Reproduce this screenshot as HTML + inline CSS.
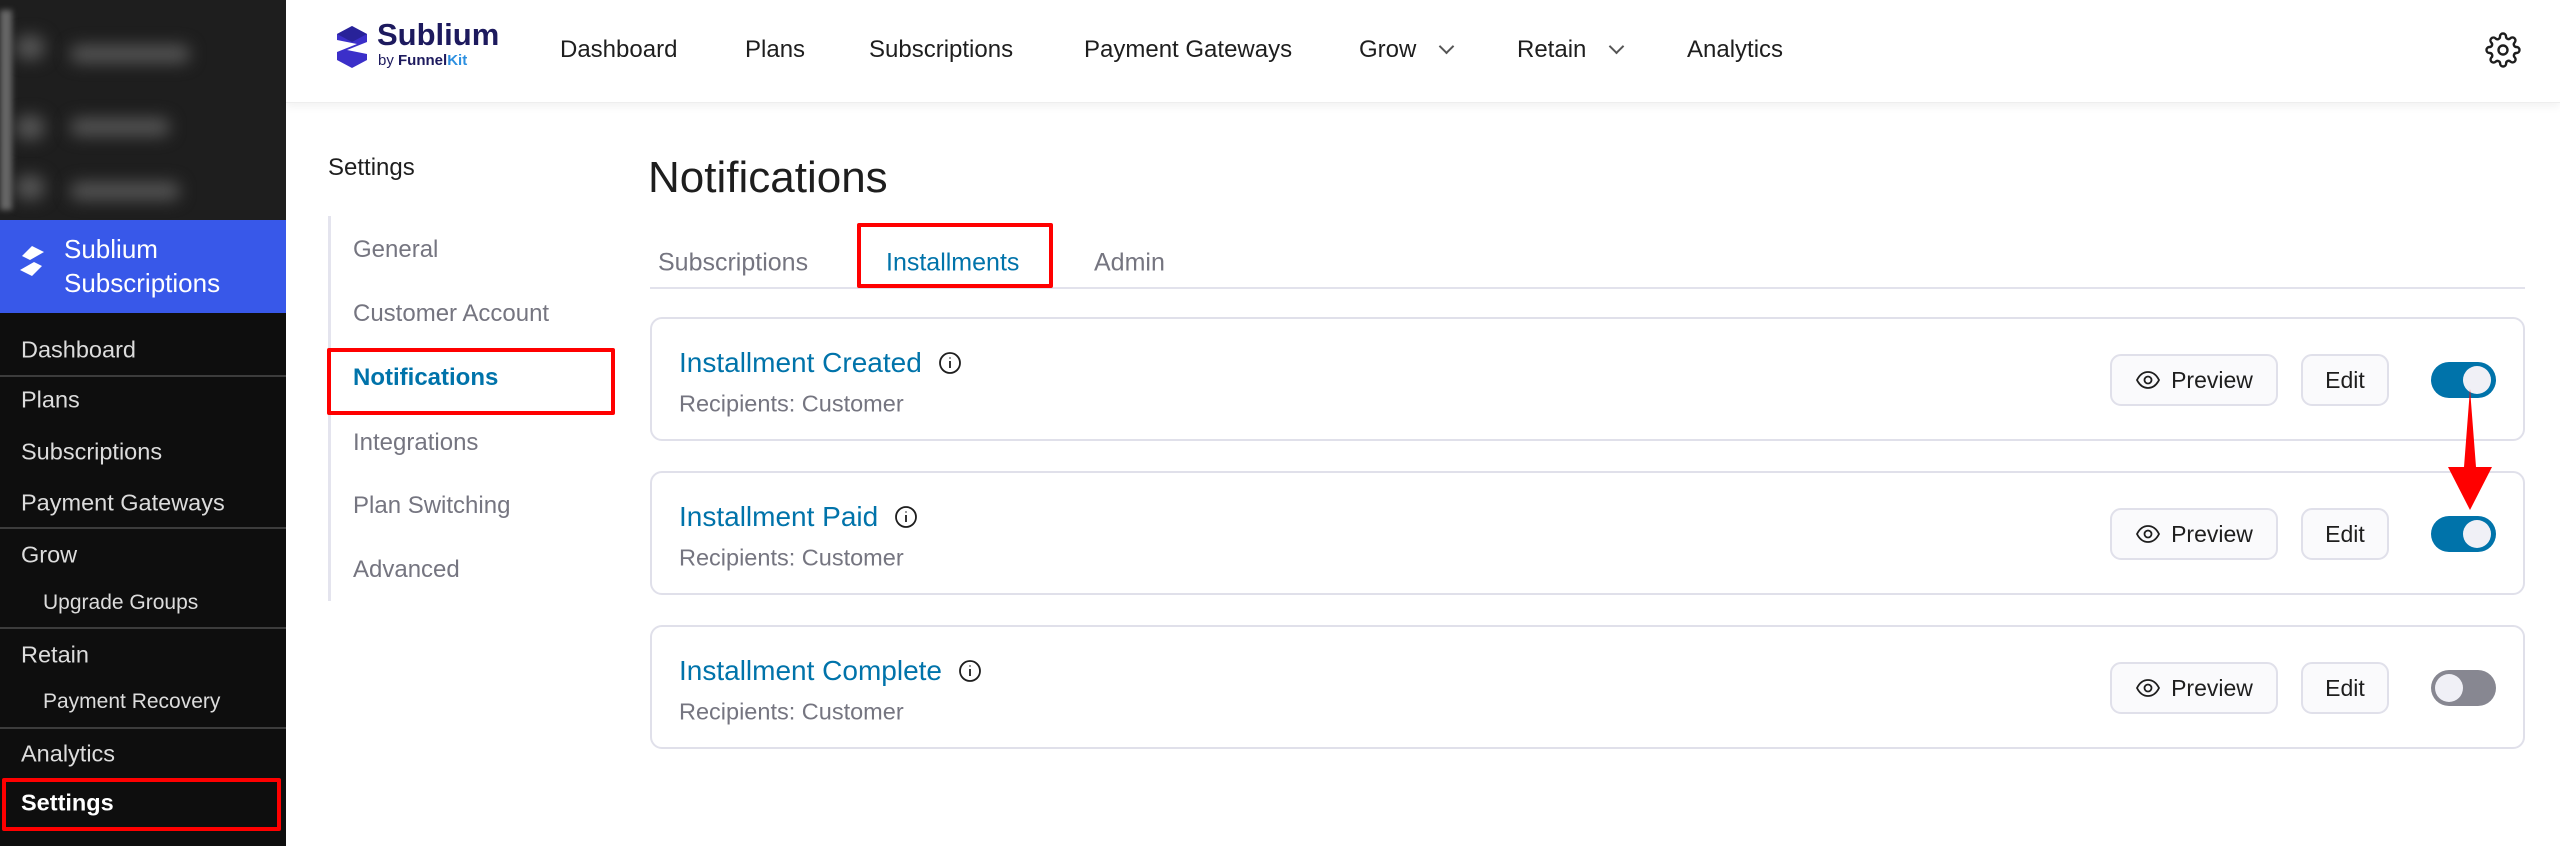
<!DOCTYPE html>
<html><head><meta charset="utf-8"><style>
*{box-sizing:border-box;margin:0;padding:0}
body{width:2560px;height:846px;overflow:hidden;font-family:"Liberation Sans",sans-serif;background:#fff;position:relative}
.abs{position:absolute}
#side{left:0;top:0;width:286px;height:846px;background:#0e0e0e}
#blur{left:0;top:0;width:286px;height:220px;background:#1e1e1e}
.bl{position:absolute;background:#555;border-radius:20px;filter:blur(8px)}
#blue{left:0;top:220px;width:286px;height:93px;background:#3858e9}
.si{position:absolute;left:21px;color:#dcdcdc;font-size:23.5px;transform:translateY(-50%)}
.sub{left:43px;font-size:21px}
.sep{position:absolute;left:0;width:286px;height:2px;background:#3c3c3c}
#hdr{left:286px;top:0;width:2274px;height:103px;background:#fff;box-shadow:0 4px 8px rgba(0,0,0,.05);border-bottom:1px solid #eee}
.nav{position:absolute;top:50px;transform:translateY(-50%);font-size:24px;color:#1e1e1e}
.st{position:absolute;left:353px;font-size:24px;color:#757580;transform:translateY(-50%)}
.tab{position:absolute;top:263px;transform:translateY(-50%);font-size:25px;color:#757580}
.card{position:absolute;left:650px;width:1875px;height:124px;border:2px solid #e0e0ea;border-radius:12px;background:#fff}
.ct{position:absolute;left:27px;top:44px;transform:translateY(-50%);font-size:28px;color:#0073aa;display:flex;align-items:center}
.ct svg{margin-left:16px}
.cr{position:absolute;left:27px;top:85px;transform:translateY(-50%);font-size:23.5px;color:#757580}
.btn{position:absolute;top:35px;height:52px;border:2px solid #e0e0ea;border-radius:11px;background:#fafafc;font-size:23px;color:#1e1e1e;display:flex;align-items:center;justify-content:center}
.tg{position:absolute;left:1779px;top:43px;width:65px;height:36px;border-radius:18px;background:#0073aa}
.tg::after{content:"";position:absolute;top:4px;left:32px;width:28px;height:28px;border-radius:50%;background:#f0f0f6}
.tg.off{background:#878791}
.tg.off::after{left:4px}
.red{position:absolute;border:4px solid #f00;border-radius:2px}
</style></head><body>
<div id="side" class="abs"></div>
<div id="blur" class="abs">
<div class="bl" style="left:15px;top:35px;width:30px;height:25px"></div>
<div class="bl" style="left:70px;top:45px;width:120px;height:18px"></div>
<div class="bl" style="left:15px;top:115px;width:30px;height:25px"></div>
<div class="bl" style="left:70px;top:118px;width:100px;height:18px"></div>
<div class="bl" style="left:15px;top:175px;width:30px;height:25px"></div>
<div class="bl" style="left:70px;top:182px;width:110px;height:18px"></div>
<div style="position:absolute;left:0;top:10px;width:12px;height:200px;background:#666;filter:blur(3px)"></div>
</div>
<div id="blue" class="abs">
<svg class="abs" style="left:18px;top:24px" width="28" height="34" viewBox="0 0 28 34"><path d="M14 2 L26 8 L12 16 L24 22 L14 32 L2 26 L16 18 L4 12 Z" fill="#fff"/></svg>
<div class="abs" style="left:64px;top:12px;color:#fff;font-size:26px;line-height:34px">Sublium<br>Subscriptions</div>
</div>
<div class="si" style="top:350px">Dashboard</div>
<div class="sep" style="top:375px"></div>
<div class="si" style="top:400px">Plans</div>
<div class="si" style="top:452px">Subscriptions</div>
<div class="si" style="top:503px">Payment Gateways</div>
<div class="sep" style="top:527px"></div>
<div class="si" style="top:555px">Grow</div>
<div class="si sub" style="top:603px">Upgrade Groups</div>
<div class="sep" style="top:627px"></div>
<div class="si" style="top:655px">Retain</div>
<div class="si sub" style="top:702px">Payment Recovery</div>
<div class="sep" style="top:727px"></div>
<div class="si" style="top:754px">Analytics</div>
<div class="si" style="top:803px;color:#fff;font-weight:bold">Settings</div>
<div class="red" style="left:2px;top:778px;width:279px;height:53px"></div>

<div id="hdr" class="abs">
<svg class="abs" style="left:47px;top:24px" width="38" height="46" viewBox="0 0 38 46"><path d="M19 2 L34 10 L34 18 L14 26 L34 30 L34 36 L19 44 L4 36 L4 28 L24 20 L4 16 L4 10 Z" fill="#3b2fc9"/><path d="M4 10 L19 2 L34 10 L19 18 Z" fill="#1c1a7a" opacity=".6"/></svg>
<div class="abs" style="left:91px;top:17px;font-size:31px;font-weight:bold;color:#1d1a5e">Sublium</div>
<div class="abs" style="left:92px;top:52px;font-size:15px;color:#1d1a5e">by <b>Funnel</b><b style="color:#2b8fe0">Kit</b></div>
<div class="nav" style="left:274px">Dashboard</div>
<div class="nav" style="left:459px">Plans</div>
<div class="nav" style="left:583px">Subscriptions</div>
<div class="nav" style="left:798px">Payment Gateways</div>
<div class="nav" style="left:1073px">Grow <span style="display:inline-block;width:11px;height:11px;border-right:2px solid #555;border-bottom:2px solid #555;transform:rotate(45deg);margin-left:18px;position:relative;top:-5px"></span></div>
<div class="nav" style="left:1231px">Retain <span style="display:inline-block;width:11px;height:11px;border-right:2px solid #555;border-bottom:2px solid #555;transform:rotate(45deg);margin-left:18px;position:relative;top:-5px"></span></div>
<div class="nav" style="left:1401px">Analytics</div>
<svg class="abs" style="left:2199px;top:32px" width="36" height="36" viewBox="0 0 24 24" fill="none" stroke="#1e1e1e" stroke-width="1.6"><circle cx="12" cy="12" r="3"/><path d="M19.4 15a1.65 1.65 0 0 0 .33 1.82l.06.06a2 2 0 1 1-2.830 2.83l-.06-.06a1.65 1.65 0 0 0-1.82-.33 1.65 1.65 0 0 0-1 1.51V21a2 2 0 1 1-4 0v-.09A1.65 1.65 0 0 0 9 19.4a1.65 1.65 0 0 0-1.820.33l-.06.06a2 2 0 1 1-2.830-2.83l.06-.06A1.65 1.65 0 0 0 4.680 15a1.65 1.65 0 0 0-1.510-1H3a2 2 0 1 1 0-4h.09A1.65 1.65 0 0 0 4.600 9a1.65 1.65 0 0 0-.33-1.820l-.06-.06a2 2 0 1 1 2.830-2.830l.06.06A1.65 1.65 0 0 0 9 4.680a1.65 1.65 0 0 0 1-1.510V3a2 2 0 1 1 4 0v.09a1.65 1.65 0 0 0 1 1.510 1.65 1.65 0 0 0 1.820-.33l.06-.06a2 2 0 1 1 2.830 2.830l-.06.06A1.65 1.65 0 0 0 19.400 9a1.65 1.65 0 0 0 1.510 1H21a2 2 0 1 1 0 4h-.09a1.65 1.65 0 0 0-1.510 1z"/></svg>
</div>

<div class="abs" style="left:328px;top:154px;font-size:24px;color:#1e1e1e">Settings</div>
<div class="abs" style="left:328px;top:216px;width:3px;height:385px;background:#e4e4ee"></div>
<div class="abs" style="left:328px;top:350px;width:3px;height:60px;background:#0073aa"></div>
<div class="st" style="top:250px">General</div>
<div class="st" style="top:314px">Customer Account</div>
<div class="st" style="top:378px;color:#0073aa;font-weight:bold">Notifications</div>
<div class="st" style="top:443px">Integrations</div>
<div class="st" style="top:506px">Plan Switching</div>
<div class="st" style="top:570px">Advanced</div>
<div class="red" style="left:327px;top:348px;width:288px;height:67px"></div>

<div class="abs" style="left:648px;top:153px;font-size:44px;color:#1e1e1e">Notifications</div>
<div class="abs" style="left:650px;top:287px;width:1875px;height:2px;background:#e2e2ec"></div>
<div class="tab" style="left:658px">Subscriptions</div>
<div class="tab" style="left:886px;color:#0073aa">Installments</div>
<div class="tab" style="left:1094px">Admin</div>
<div class="red" style="left:857px;top:223px;width:196px;height:65px"></div>

<div class="card" style="top:317px">
<div class="ct">Installment Created <svg width="24" height="24" viewBox="0 0 24 24" fill="none" stroke="#1e1e1e" stroke-width="1.8"><circle cx="12" cy="12" r="10"/><path d="M12 10v7M12 6.5v1"/></svg></div>
<div class="cr">Recipients: Customer</div>
<div class="btn" style="left:1458px;width:168px"><svg width="26" height="20" viewBox="0 0 26 20" fill="none" stroke="#1e1e1e" stroke-width="1.8" style="margin-right:10px"><path d="M2 10C5 4 9 2 13 2s8 2 11 8c-3 6-7 8-11 8S5 16 2 10z"/><circle cx="13" cy="10" r="3.5"/></svg>Preview</div>
<div class="btn" style="left:1649px;width:88px">Edit</div>
<div class="tg"></div>
</div>
<div class="card" style="top:471px">
<div class="ct">Installment Paid <svg width="24" height="24" viewBox="0 0 24 24" fill="none" stroke="#1e1e1e" stroke-width="1.8"><circle cx="12" cy="12" r="10"/><path d="M12 10v7M12 6.5v1"/></svg></div>
<div class="cr">Recipients: Customer</div>
<div class="btn" style="left:1458px;width:168px"><svg width="26" height="20" viewBox="0 0 26 20" fill="none" stroke="#1e1e1e" stroke-width="1.8" style="margin-right:10px"><path d="M2 10C5 4 9 2 13 2s8 2 11 8c-3 6-7 8-11 8S5 16 2 10z"/><circle cx="13" cy="10" r="3.5"/></svg>Preview</div>
<div class="btn" style="left:1649px;width:88px">Edit</div>
<div class="tg"></div>
</div>
<div class="card" style="top:625px">
<div class="ct">Installment Complete <svg width="24" height="24" viewBox="0 0 24 24" fill="none" stroke="#1e1e1e" stroke-width="1.8"><circle cx="12" cy="12" r="10"/><path d="M12 10v7M12 6.5v1"/></svg></div>
<div class="cr">Recipients: Customer</div>
<div class="btn" style="left:1458px;width:168px"><svg width="26" height="20" viewBox="0 0 26 20" fill="none" stroke="#1e1e1e" stroke-width="1.8" style="margin-right:10px"><path d="M2 10C5 4 9 2 13 2s8 2 11 8c-3 6-7 8-11 8S5 16 2 10z"/><circle cx="13" cy="10" r="3.5"/></svg>Preview</div>
<div class="btn" style="left:1649px;width:88px">Edit</div>
<div class="tg off"></div>
</div>
<svg class="abs" style="left:2440px;top:385px" width="60" height="130" viewBox="0 0 60 130"><path d="M30 4 L36 82 L52 82 L30 125 L8 82 L24 82 Z" fill="#f00"/></svg>
</body></html>
